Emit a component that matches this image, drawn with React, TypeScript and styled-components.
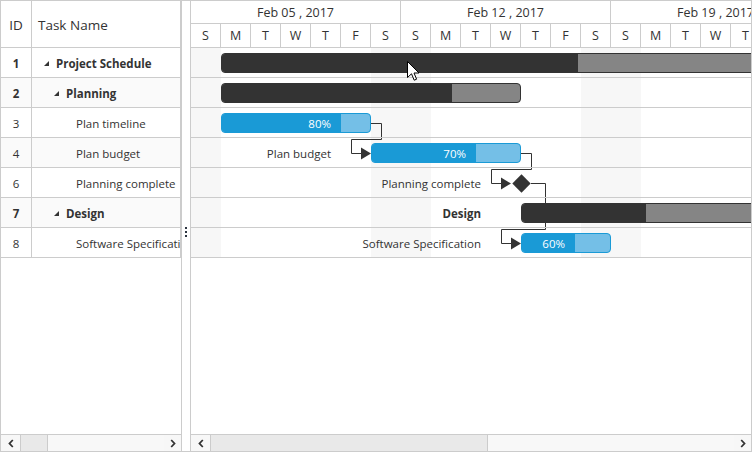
import styled, { createGlobalStyle } from "styled-components";

const LINE = "#cccccc";
const DAY = 30;

const GlobalStyle = createGlobalStyle`
  html, body {
    margin: 0;
    padding: 0;
    background: #ffffff;
  }
  body {
    font-family: "Segoe UI", "Open Sans", sans-serif;
    color: #333333;
  }
`;

type Kind = "summary" | "task" | "milestone";

type Task = {
  id: number;
  name: string;
  level: number;
  parent?: boolean;
  kind: Kind;
  start: number;
  duration: number;
  progress: number;
  label?: string;
};

const tasks: Task[] = [
  { id: 1, name: "Project Schedule", level: 0, parent: true, kind: "summary", start: 1, duration: 20, progress: 59.3 },
  { id: 2, name: "Planning", level: 1, parent: true, kind: "summary", start: 1, duration: 10, progress: 76.7 },
  { id: 3, name: "Plan timeline", level: 2, kind: "task", start: 1, duration: 5, progress: 80 },
  { id: 4, name: "Plan budget", level: 2, kind: "task", start: 6, duration: 5, progress: 70, label: "Plan budget" },
  { id: 6, name: "Planning complete", level: 2, kind: "milestone", start: 11, duration: 0, progress: 0, label: "Planning complete" },
  { id: 7, name: "Design", level: 1, parent: true, kind: "summary", start: 11, duration: 10, progress: 41.3, label: "Design" },
  { id: 8, name: "Software Specification", level: 2, kind: "task", start: 11, duration: 3, progress: 60, label: "Software Specification" },
];

const weeks = ["Feb 05 , 2017", "Feb 12 , 2017", "Feb 19 , 2017"];
const dayNames = ["S", "M", "T", "W", "T", "F", "S"];

const Gantt = styled.div`
  display: flex;
  width: 752px;
  height: 452px;
  box-sizing: border-box;
  border: 1px solid ${LINE};
  background: #ffffff;
  overflow: hidden;
`;

/* ---------- left grid ---------- */

const GridPane = styled.div`
  display: flex;
  flex-direction: column;
  width: 180px;
  flex: none;
`;

const GridRow = styled.div<{ $header?: boolean; $alt?: boolean }>`
  display: flex;
  height: ${(p) => (p.$header ? 47 : 30)}px;
  box-sizing: border-box;
  border-bottom: 1px solid ${LINE};
  background: ${(p) => (p.$alt ? "#fafafa" : "#ffffff")};
  flex: none;
`;

const IdCell = styled.div<{ $bold?: boolean; $header?: boolean }>`
  display: flex;
  align-items: center;
  justify-content: center;
  width: 31px;
  box-sizing: border-box;
  border-right: 1px solid ${LINE};
  padding-top: 1px;
  font-size: ${(p) => (p.$header ? 13.5 : 11.5)}px;
  font-weight: ${(p) => (p.$bold ? 700 : 400)};
`;

const NameCell = styled.div<{ $indent: number; $bold?: boolean; $header?: boolean }>`
  display: flex;
  align-items: center;
  width: 149px;
  box-sizing: border-box;
  border-right: 1px solid ${LINE};
  padding-left: ${(p) => p.$indent}px;
  padding-top: 1px;
  font-size: ${(p) => (p.$header ? 13.5 : 11.5)}px;
  font-weight: ${(p) => (p.$bold ? 700 : 400)};
  white-space: nowrap;
  overflow: hidden;
`;

const Expander = styled.span`
  flex: none;
  width: 0;
  height: 0;
  border-left: 5px solid transparent;
  border-bottom: 5px solid #333333;
  margin-right: 7px;
`;

const Filler = styled.div`
  flex: 1;
`;

/* ---------- splitter ---------- */

const Splitter = styled.div`
  display: flex;
  flex-direction: column;
  align-items: center;
  gap: 2px;
  width: 10px;
  flex: none;
  box-sizing: border-box;
  border-left: 1px solid ${LINE};
  border-right: 1px solid ${LINE};
  padding-top: 226px;
`;

const Dot = styled.span`
  width: 2px;
  height: 2px;
  background: #2b3440;
`;

/* ---------- chart ---------- */

const ChartPane = styled.div`
  display: flex;
  flex-direction: column;
  flex: 1;
  min-width: 0;
  overflow: hidden;
`;

const Timeline = styled.div`
  display: flex;
  flex-direction: column;
  width: ${DAY * 21}px;
  flex: none;
`;

const WeekRow = styled.div`
  display: flex;
  height: 23px;
  box-sizing: border-box;
  border-bottom: 1px solid ${LINE};
`;

const WeekCell = styled.div`
  display: flex;
  align-items: center;
  justify-content: center;
  width: ${DAY * 7}px;
  box-sizing: border-box;
  border-right: 1px solid ${LINE};
  font-size: 12.5px;
`;

const DayRow = styled.div`
  display: flex;
  height: 24px;
  box-sizing: border-box;
  border-bottom: 1px solid ${LINE};
`;

const DayCell = styled.div`
  display: flex;
  align-items: center;
  justify-content: center;
  width: ${DAY}px;
  box-sizing: border-box;
  border-right: 1px solid ${LINE};
  font-size: 12.5px;
`;

const ChartBody = styled.div`
  flex: 1;
`;

const ChartRows = styled.div`
  position: relative;
  isolation: isolate;
  width: ${DAY * 21}px;
  background-image: linear-gradient(
    to right,
    #f7f7f7 0 ${DAY}px,
    transparent ${DAY}px ${DAY * 6}px,
    #f7f7f7 ${DAY * 6}px ${DAY * 7}px
  );
  background-size: ${DAY * 7}px 100%;
`;

const ChartRow = styled.div`
  display: flex;
  align-items: center;
  height: 30px;
  box-sizing: border-box;
  border-bottom: 1px solid ${LINE};
`;

const Lead = styled.div`
  display: flex;
  justify-content: flex-end;
  flex: none;
  padding-top: 2px;
`;

const BarLabel = styled.span<{ $bold?: boolean; $gap: number }>`
  margin-right: ${(p) => p.$gap}px;
  font-size: 11.5px;
  font-weight: ${(p) => (p.$bold ? 700 : 400)};
  white-space: nowrap;
`;

const SummaryBar = styled.div`
  display: flex;
  flex: none;
  height: 20px;
  margin-top: 1px;
  box-sizing: border-box;
  border: 1px solid #333333;
  border-radius: 4px;
  background: #858585;
  overflow: hidden;
`;

const SummaryDone = styled.div`
  background: #333333;
`;

const TaskBar = styled.div`
  display: flex;
  flex: none;
  height: 20px;
  margin-top: 1px;
  box-sizing: border-box;
  border: 1px solid #1a9ad6;
  border-radius: 4px;
  background: #74bfe7;
  overflow: hidden;
`;

const TaskDone = styled.div`
  display: flex;
  align-items: center;
  justify-content: flex-end;
  box-sizing: border-box;
  padding-right: 10px;
  background: #1a9ad6;
  color: #ffffff;
  font-size: 11.5px;
`;

const MilestoneBox = styled.div`
  display: flex;
  align-items: center;
  justify-content: center;
  flex: none;
  width: 20px;
  height: 20px;
  margin-top: 1px;
`;

const Diamond = styled.span`
  width: 13px;
  height: 13px;
  background: #333333;
  transform: rotate(45deg);
`;

const Connectors = styled.svg`
  position: absolute;
  left: 0;
  top: 0;
  z-index: -1;
`;

const Cursor = styled.svg`
  position: absolute;
  left: 216px;
  top: 13px;
  z-index: 2;
`;

/* ---------- scrollbars ---------- */

const Scrollbar = styled.div`
  display: flex;
  flex: none;
  height: 17px;
  box-sizing: border-box;
  border-top: 1px solid ${LINE};
`;

const ScrollButton = styled.div<{ $width: number; $divider?: boolean }>`
  display: flex;
  align-items: center;
  justify-content: center;
  width: ${(p) => p.$width}px;
  flex: none;
  box-sizing: border-box;
  border-right: ${(p) => (p.$divider ? `1px solid ${LINE}` : "none")};
  background: #f7f7f7;
`;

const Track = styled.div<{ $width: number }>`
  width: ${(p) => p.$width}px;
  flex: none;
  box-sizing: border-box;
  border-right: 1px solid ${LINE};
  background: #e9e9e9;
`;

const Thumb = styled.div`
  flex: 1;
  background: #f8f8f8;
`;

function Chevron({ dir }: { dir: "left" | "right" }) {
  return (
    <svg width="6" height="9" viewBox="0 0 6 9">
      <path
        d={dir === "left" ? "M4.8 1 L1.5 4.5 L4.8 8" : "M1.2 1 L4.5 4.5 L1.2 8"}
        fill="none"
        stroke="#333333"
        strokeWidth="1.8"
      />
    </svg>
  );
}

function Bar({ task }: { task: Task }) {
  const width = task.duration * DAY;
  if (task.kind === "milestone") {
    return (
      <MilestoneBox>
        <Diamond />
      </MilestoneBox>
    );
  }
  if (task.kind === "summary") {
    return (
      <SummaryBar style={{ width }}>
        <SummaryDone style={{ width: (width * task.progress) / 100 }} />
      </SummaryBar>
    );
  }
  return (
    <TaskBar style={{ width }}>
      <TaskDone style={{ width: (width * task.progress) / 100 - 1 }}>{task.progress}%</TaskDone>
    </TaskBar>
  );
}

export default function App() {
  return (
    <>
      <GlobalStyle />
      <Gantt>
        <GridPane>
          <GridRow $header>
            <IdCell $header>ID</IdCell>
            <NameCell $header $indent={6}>
              Task Name
            </NameCell>
          </GridRow>
          {tasks.map((t, i) => (
            <GridRow key={t.id} $alt={i % 2 === 1}>
              <IdCell $bold={t.parent}>{t.id}</IdCell>
              <NameCell $bold={t.parent} $indent={t.parent ? 12 + t.level * 10 : 24 + t.level * 10}>
                {t.parent && <Expander />}
                {t.name}
              </NameCell>
            </GridRow>
          ))}
          <Filler />
          <Scrollbar>
            <ScrollButton $width={20} $divider>
              <Chevron dir="left" />
            </ScrollButton>
            <Track $width={27} />
            <Thumb />
            <ScrollButton $width={17}>
              <Chevron dir="right" />
            </ScrollButton>
          </Scrollbar>
        </GridPane>

        <Splitter>
          <Dot />
          <Dot />
          <Dot />
        </Splitter>

        <ChartPane>
          <Timeline>
            <WeekRow>
              {weeks.map((w) => (
                <WeekCell key={w}>{w}</WeekCell>
              ))}
            </WeekRow>
            <DayRow>
              {weeks.flatMap((w) =>
                dayNames.map((d, i) => <DayCell key={w + i}>{d}</DayCell>)
              )}
            </DayRow>
          </Timeline>

          <ChartBody>
            <ChartRows>
              <Connectors width={DAY * 21} height={210}>
                <g fill="none" stroke="#333333" strokeWidth="1">
                  <path d="M180 75.5 H190.5 V91.5 H160.5 V105.5 H171" />
                  <path d="M330 105.5 H340.5 V121.5 H300.5 V135.5 H311" />
                  <path d="M340 135.5 H354.5 V181.5 H310.5 V195.5 H321" />
                </g>
                <g fill="#333333">
                  <polygon points="170,99.5 180,105.5 170,111.5" />
                  <polygon points="310,129.5 320,135.5 310,141.5" />
                  <polygon points="320,189.5 330,195.5 320,201.5" />
                </g>
              </Connectors>
              {tasks.map((t) => {
                const lead = t.kind === "milestone" ? t.start * DAY - 10 : t.start * DAY;
                return (
                  <ChartRow key={t.id}>
                    <Lead style={{ width: lead }}>
                      {t.label && (
                        <BarLabel $bold={t.parent} $gap={t.kind === "milestone" ? 30 : 40}>
                          {t.label}
                        </BarLabel>
                      )}
                    </Lead>
                    <Bar task={t} />
                  </ChartRow>
                );
              })}
              <Cursor width="13" height="21" viewBox="0 0 13 21">
                <path
                  d="M0.5 0.5 L0.5 16.5 L4.5 12.8 L7.2 19.2 L9.6 18.2 L7 12 L12 12 Z"
                  fill="#ffffff"
                  stroke="#000000"
                  strokeWidth="1"
                  strokeLinejoin="miter"
                />
              </Cursor>
            </ChartRows>
          </ChartBody>

          <Scrollbar>
            <ScrollButton $width={20} $divider>
              <Chevron dir="left" />
            </ScrollButton>
            <Track $width={277} />
            <Thumb />
            <ScrollButton $width={17}>
              <Chevron dir="right" />
            </ScrollButton>
          </Scrollbar>
        </ChartPane>
      </Gantt>
    </>
  );
}
